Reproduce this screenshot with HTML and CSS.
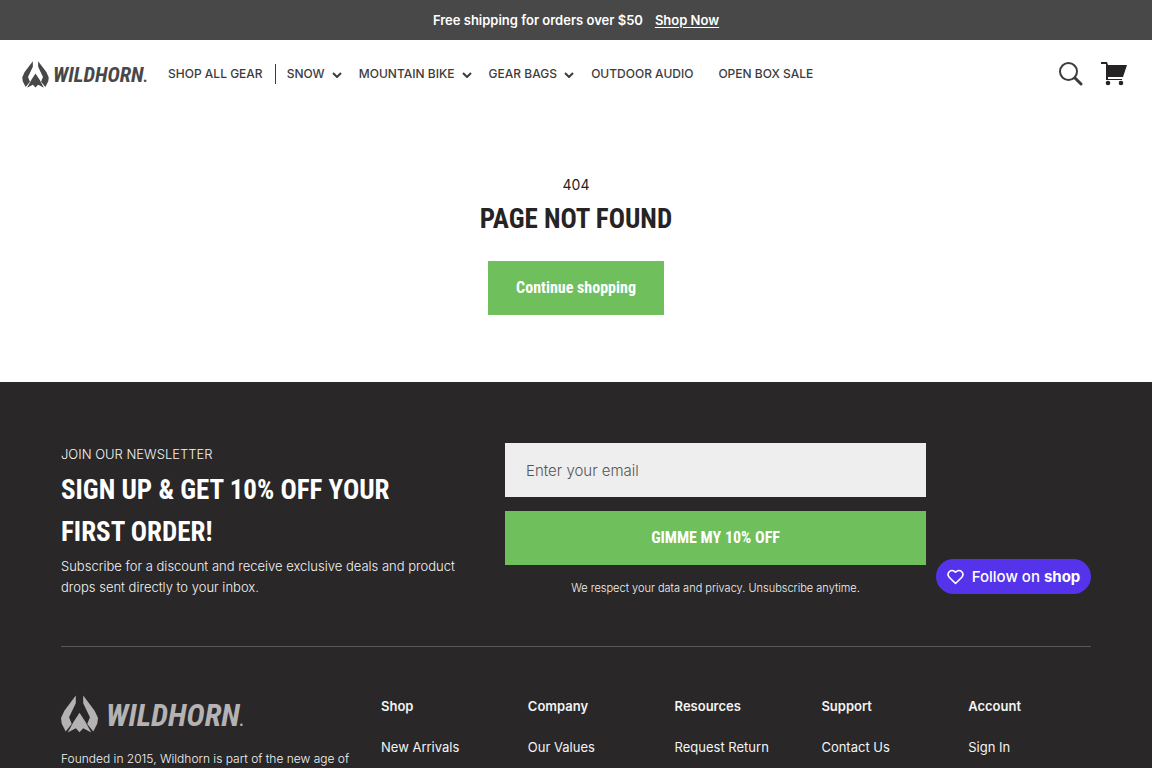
FILE: index.html
```
<!DOCTYPE html>
<html lang="en">
<head>
  <meta charset="UTF-8" />
  <meta name="viewport" content="width=device-width, initial-scale=1.0"/>
  <title>404 Not Found - Wildhorn</title>
  <link rel="stylesheet" href="styles.css">
</head>
<body>
  <div class="announcement">
    <span>Free shipping for orders over $50</span>
    <a href="#">Shop Now</a>
  </div>

  <header class="header">
    <a href="#" class="logo" aria-label="Wildhorn">
      <svg class="logo-mark" viewBox="0 0 110 112" fill="currentColor">
        <path d="M44 1V24L24 66L32 86L14 108L2 84L0 68L10 46Z"/>
        <path d="M66 1V24L86 66L78 86L96 108L108 84L110 68L100 46Z"/>
        <path d="M55 52L38 78L20 111L44 98L55 110L66 98L90 111L72 78Z"/>
      </svg>
      <span class="logo-text">WILDHORN<small>.</small></span>
    </a>
    <nav class="nav">
      <a href="#" class="nav-first">Shop All Gear</a>
      <a href="#">Snow <svg class="chevron" viewBox="0 0 10 6"><path d="M1 1L5 5L9 1"/></svg></a>
      <a href="#">Mountain Bike <svg class="chevron" viewBox="0 0 10 6"><path d="M1 1L5 5L9 1"/></svg></a>
      <a href="#">Gear Bags <svg class="chevron" viewBox="0 0 10 6"><path d="M1 1L5 5L9 1"/></svg></a>
      <a href="#" class="nav-plain">Outdoor Audio</a>
      <a href="#">Open Box Sale</a>
    </nav>
    <div class="header-icons">
      <button type="button" aria-label="Search">
        <svg width="24" height="24" viewBox="0 0 24 24" fill="none" stroke="#3c3c3c">
          <circle cx="9.5" cy="9.5" r="8.5" stroke-width="2"/>
          <path d="M16 16L22 22" stroke-width="3" stroke-linecap="round"/>
        </svg>
      </button>
      <a href="#" aria-label="Cart">
        <svg width="26" height="24" viewBox="0 0 26 24" fill="#252324">
          <path d="M0 0H6L7 3H26L22 15H7V17H21V18H5V2H0Z"/>
          <circle cx="7" cy="21" r="2.3"/>
          <circle cx="20" cy="21" r="2.3"/>
        </svg>
      </a>
    </div>
  </header>

  <main class="not-found">
    <p>404</p>
    <h1>Page not found</h1>
    <a href="#" class="button">Continue shopping</a>
  </main>

  <footer class="footer">
    <div class="newsletter">
      <div class="newsletter-text">
        <p>JOIN OUR NEWSLETTER</p>
        <h2>Sign up &amp; get 10% off your first order!</h2>
        <p>Subscribe for a discount and receive exclusive deals and product drops sent directly to your inbox.</p>
      </div>
      <form class="newsletter-form">
        <input type="email" aria-label="Enter your email" placeholder="Enter your email">
        <button type="submit" class="button">GIMME MY 10% OFF</button>
        <p>We respect your data and privacy. Unsubscribe anytime.</p>
      </form>
      <button type="button" class="follow">
        <svg width="17" height="16" viewBox="0 0 17 16" fill="none" stroke="#fff" stroke-width="1.6" stroke-linejoin="round">
          <path d="M8.5 14.5L2.2 8.2C-1 4.5 4-1.5 8.5 3.2C13-1.5 18 4.5 14.8 8.2Z"/>
        </svg>
        <span>Follow on <b>shop</b></span>
      </button>
    </div>

    <div class="footer-main">
      <div class="about">
        <a href="#" class="logo logo-footer" aria-label="Wildhorn">
          <svg class="logo-mark" viewBox="0 0 110 112" fill="currentColor">
            <path d="M44 1V24L24 66L32 86L14 108L2 84L0 68L10 46Z"/>
            <path d="M66 1V24L86 66L78 86L96 108L108 84L110 68L100 46Z"/>
            <path d="M55 52L38 78L20 111L44 98L55 110L66 98L90 111L72 78Z"/>
          </svg>
          <span class="logo-text">WILDHORN<small>.</small></span>
        </a>
        <p>Founded in 2015, Wildhorn is part of the new age of</p>
      </div>
      <div class="links">
        <div><h3>Shop</h3><a href="#">New Arrivals</a></div>
        <div><h3>Company</h3><a href="#">Our Values</a></div>
        <div><h3>Resources</h3><a href="#">Request Return</a></div>
        <div><h3>Support</h3><a href="#">Contact Us</a></div>
        <div><h3>Account</h3><a href="#">Sign In</a></div>
      </div>
    </div>
  </footer>
</body>
</html>
```
FILE: styles.css
```
* {
  box-sizing: border-box;
}

body {
  margin: 0;
  font-family: "Inter", "Liberation Sans", sans-serif;
  font-size: 13px;
  color: #252324;
  background: #fff;
}

h1, h2, h3, p {
  margin: 0;
}

a {
  color: inherit;
  text-decoration: none;
}

button {
  font-family: inherit;
  border: none;
  cursor: pointer;
}

.announcement {
  display: flex;
  justify-content: center;
  gap: 12px;
  padding: 10px;
  line-height: 20px;
  font-weight: 600;
  color: #fff;
  background: #484848;
}

.announcement a {
  text-decoration: underline;
  text-underline-offset: 2px;
}

.header {
  display: flex;
  align-items: center;
  height: 68px;
  padding: 0 25px 0 22px;
}

.logo {
  display: flex;
  align-items: flex-end;
  gap: 4px;
  color: #484848;
}

.logo-mark {
  width: 27px;
  height: 27px;
}

.logo-text {
  font-family: "Roboto Condensed", "Roboto", sans-serif;
  font-size: 21px;
  font-weight: bold;
  font-style: italic;
  line-height: 22px;
}

.logo-text small {
  font-size: 16px;
}

.nav {
  display: flex;
  align-items: center;
  gap: 17px;
  margin-left: 20px;
  font-size: 12px;
  font-weight: 500;
  line-height: 20px;
  text-transform: uppercase;
  color: #3c3c3c;
}

.nav-first {
  padding-right: 12px;
  margin-right: -6px;
  border-right: 1px solid #3c3c3c;
}

.nav-plain {
  margin-right: 8px;
}

.chevron {
  width: 10px;
  height: 6px;
  margin-left: 4px;
  fill: none;
  stroke: #3c3c3c;
  stroke-width: 2;
}

.header-icons {
  display: flex;
  align-items: center;
  gap: 18px;
  margin-left: auto;
}

.header-icons > * {
  display: flex;
  padding: 0;
  background: none;
}

.not-found {
  display: flex;
  flex-direction: column;
  align-items: center;
  padding: 66px 20px 67px;
}

.not-found p {
  font-size: 14px;
  line-height: 22px;
}

h1, h2 {
  font-family: "Roboto Condensed", "Roboto", sans-serif;
  font-size: 27px;
  line-height: 42px;
  text-transform: uppercase;
}

.not-found h1 {
  margin: 2px 0 21px;
}

.button {
  height: 54px;
  padding: 0 28px;
  font-family: "Roboto Condensed", "Roboto", sans-serif;
  font-size: 16px;
  font-weight: bold;
  line-height: 54px;
  color: #fff;
  background: #6fbf5c;
}

.footer {
  padding: 61px 61px 20px;
  color: #f4f4f4;
  background: #292728;
}

.newsletter {
  display: grid;
  grid-template-columns: 404px 1fr 155px;
  align-items: start;
  padding-bottom: 48px;
  border-bottom: 1px solid #5a5859;
}

.newsletter-text {
  padding: 1px 8px 0 0;
  font-weight: 300;
  line-height: 21px;
}

.newsletter-text h2 {
  margin: 4px 0 3px;
  color: #fff;
}

.newsletter-form {
  display: flex;
  flex-direction: column;
  gap: 14px;
  margin: 0 10px 0 40px;
}

.newsletter-form input {
  height: 54px;
  padding: 0 21px;
  border: none;
  font-family: inherit;
  font-size: 15px;
  font-weight: 300;
  background: #eee;
}

.newsletter-form input::placeholder {
  color: #555;
}

.newsletter-form p {
  font-size: 11px;
  font-weight: 300;
  line-height: 18px;
  text-align: center;
}

.follow {
  display: flex;
  align-items: center;
  align-self: end;
  justify-content: center;
  gap: 8px;
  height: 35px;
  margin-bottom: 4px;
  padding: 0;
  border-radius: 18px;
  font-size: 15px;
  font-weight: 500;
  color: #fff;
  background: #5433eb;
}

.footer-main {
  display: flex;
  padding-top: 48px;
}

.about {
  flex: 0 0 320px;
  font-size: 12px;
  font-weight: 300;
  line-height: 20px;
}

.logo-footer {
  gap: 8px;
  margin-bottom: 16px;
  color: #b4b2b3;
}

.logo-footer .logo-mark {
  width: 37px;
  height: 38px;
}

.logo-footer .logo-text {
  font-size: 31px;
  line-height: 24px;
}

.links {
  display: grid;
  flex: 1;
  grid-template-columns: repeat(5, 1fr);
  gap: 24px;
  padding-top: 1px;
  line-height: 20px;
}

.links h3 {
  margin-bottom: 21px;
  font-size: 13px;
  font-weight: 600;
}
```
